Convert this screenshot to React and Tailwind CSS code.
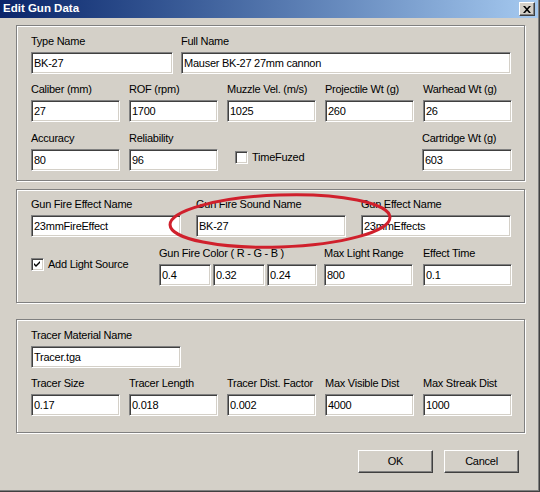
import React from 'react';

const sunken =
    'bg-white border border-t-[#808080] border-l-[#808080] border-b-white border-r-white shadow-[inset_1px_1px_0_#404040,inset_-1px_-1px_0_#d4d0c8]';
const raised =
    'bg-[#d4d0c8] border border-t-white border-l-white border-b-[#404040] border-r-[#404040] shadow-[inset_-1px_-1px_0_#808080]';

const Field = ({ label, value, className = '' }) => (
    <div className={`flex flex-col ${className}`}>
        <div className="h-[13px] leading-[13px] whitespace-nowrap">{label}</div>
        <Box value={value} className="mt-[4px] w-full" />
    </div>
);

const Box = ({ value, className = '' }) => (
    <div className={`h-[22px] shrink-0 flex items-center pl-[2px] leading-none whitespace-nowrap ${sunken} ${className}`}>
        {value}
    </div>
);

const Check = ({ checked, label, className = '' }) => (
    <div className={`flex items-center ${className}`}>
        <div className={`w-[13px] h-[13px] shrink-0 flex items-center justify-center ${sunken}`}>
            {checked && (
                <svg width="7" height="7" viewBox="0 0 7 7">
                    <path d="M0 2 L2 4 L6 0 L6 2 L2 6 L0 4 Z" fill="#000" />
                </svg>
            )}
        </div>
        <span className="ml-[4px] leading-[13px]">{label}</span>
    </div>
);

const Group = ({ className = '', children }) => (
    <div
        className={`w-[509px] border border-[#808080] shadow-[inset_1px_1px_0_#fff,1px_1px_0_#fff] pl-[14px] ${className}`}
    >
        {children}
    </div>
);

const Button = ({ children, className = '' }) => (
    <div className={`w-[75px] h-[23px] flex items-center justify-center ${raised} ${className}`}>{children}</div>
);

export default function App() {
    return (
        <div
            className="relative w-[540px] h-[492px] overflow-hidden bg-[#d4d0c8] border-r border-b border-[#404040] shadow-[inset_-1px_-1px_0_#808080] text-[11px] tracking-[-0.25px] text-black"
            style={{ fontFamily: '"Liberation Sans", Arial, sans-serif' }}
        >
            {/* title bar */}
            <div className="w-[538px] h-[18px] flex items-center bg-gradient-to-r from-[#0a246a] to-[#a6caf0] pl-[3px] pr-[3px]">
                <span className="text-white font-bold text-[11.5px] tracking-normal leading-none">Edit Gun Data</span>
                <div className={`ml-auto w-[16px] h-[14px] flex items-center justify-center ${raised}`}>
                    <svg width="8" height="7" viewBox="0 0 8 7">
                        <path d="M0 0h2l2 2.2L6 0h2L5 3.5 8 7H6L4 4.8 2 7H0l3-3.5z" fill="#000" />
                    </svg>
                </div>
            </div>

            <div className="pl-[16px]">
                <Group className="mt-[7px] pt-[9px] pb-[9px]">
                    <div className="flex gap-[8px]">
                        <Field label="Type Name" value="BK-27" className="w-[142px]" />
                        <Field label="Full Name" value="Mauser BK-27 27mm cannon" className="w-[330px]" />
                    </div>
                    <div className="mt-[9px] grid grid-cols-[repeat(5,89px)] gap-x-[9px]">
                        <Field label="Caliber (mm)" value="27" />
                        <Field label="ROF (rpm)" value="1700" />
                        <Field label="Muzzle Vel. (m/s)" value="1025" />
                        <Field label="Projectile Wt (g)" value="260" />
                        <Field label="Warhead Wt (g)" value="26" />
                    </div>
                    <div className="mt-[10px] grid grid-cols-[repeat(5,89px)] gap-x-[9px]">
                        <Field label="Accuracy" value="80" />
                        <Field label="Reliability" value="96" />
                        <Check label="TimeFuzed" className="self-start mt-[19px] ml-[8px]" />
                        <div />
                        <Field label="Cartridge Wt (g)" value="603" className="-ml-[1px]" />
                    </div>
                </Group>

                <Group className="mt-[8px] pt-[8px] pb-[16px]">
                    <div className="flex gap-[15px]">
                        <Field label="Gun Fire Effect Name" value="23mmFireEffect" className="w-[150px]" />
                        <Field label="Gun Fire Sound Name" value="BK-27" className="w-[150px]" />
                        <Field label="Gun Effect Name" value="23mmEffects" className="w-[150px]" />
                    </div>
                    <div className="mt-[10px] flex">
                        <Check checked label="Add Light Source" className="w-[128px] shrink-0 self-start mt-[11px]" />
                        <div className="flex flex-col w-[158px] shrink-0">
                            <div className="h-[13px] leading-[13px] whitespace-nowrap">Gun Fire Color ( R - G - B )</div>
                            <div className="mt-[4px] flex gap-[2px]">
                                <Box value="0.4" className="w-[52px]" />
                                <Box value="0.32" className="w-[52px]" />
                                <Box value="0.24" className="w-[50px]" />
                            </div>
                        </div>
                        <Field label="Max Light Range" value="800" className="w-[89px] shrink-0 ml-[7px]" />
                        <Field label="Effect Time" value="0.1" className="w-[89px] shrink-0 ml-[10px]" />
                    </div>
                </Group>

                <Group className="mt-[16px] pt-[9px] pb-[16px]">
                    <Field label="Tracer Material Name" value="Tracer.tga" className="w-[150px]" />
                    <div className="mt-[9px] grid grid-cols-[repeat(5,89px)] gap-x-[9px]">
                        <Field label="Tracer Size" value="0.17" />
                        <Field label="Tracer Length" value="0.018" />
                        <Field label="Tracer Dist. Factor" value="0.002" />
                        <Field label="Max Visible Dist" value="4000" />
                        <Field label="Max Streak Dist" value="1000" />
                    </div>
                </Group>

                <div className="mt-[17px] flex ml-[342px]">
                    <Button>OK</Button>
                    <Button className="ml-[11px]">Cancel</Button>
                </div>
            </div>

            {/* red annotation ellipse drawn over the sound name field */}
            <svg className="absolute left-0 top-0 pointer-events-none" width="540" height="492">
                <ellipse
                    cx="280"
                    cy="221"
                    rx="110"
                    ry="26"
                    transform="rotate(-2 280 221)"
                    fill="none"
                    stroke="#d0202c"
                    strokeWidth="3"
                />
            </svg>
        </div>
    );
}
